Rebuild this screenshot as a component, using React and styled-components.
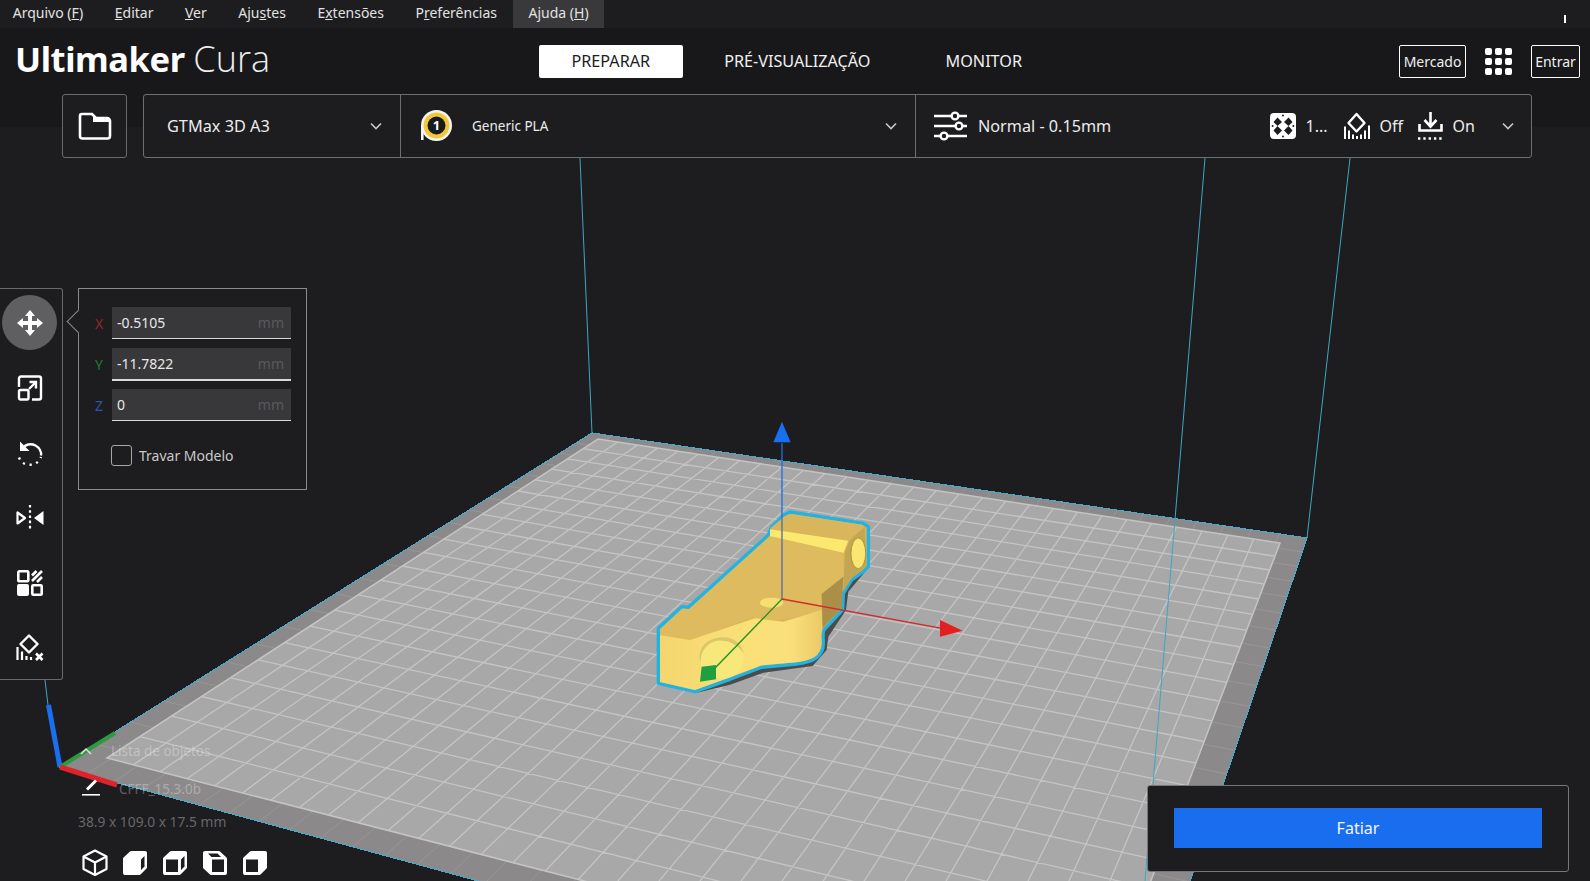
import React, { useMemo } from 'react';
import styled, { createGlobalStyle } from 'styled-components';

const GlobalStyle = createGlobalStyle`
  html, body { margin: 0; padding: 0; background: #1d1d1f; }
  body { font-family: "Noto Sans", "Open Sans", sans-serif; color: #fff; }
`;

const Page = styled.div`
  position: relative;
  width: 1590px;
  height: 881px;
  overflow: hidden;
  display: flex;
  flex-direction: column;
  background: #1d1d1f;
`;

const Scene = styled.svg`
  position: absolute;
  inset: 0;
  width: 1590px;
  height: 881px;
`;

const TopArea = styled.div`
  position: relative;
  flex: none;
  background: linear-gradient(to bottom, #1d1d1f 0 28px, #18181a 28px 127px, transparent 127px);
`;

const MenuBar = styled.div`
  display: flex;
  height: 28px;
  margin-left: -3px;
`;

const MenuItem = styled.div`
  padding: 0 15.75px;
  line-height: 26px;
  font-size: 14px;
  color: #e2e2e2;
  background: ${(props) => (props.$open ? '#39393b' : 'transparent')};
`;

const Mnemonic = styled.span`
  text-decoration: underline;
`;

const Tick = styled.div`
  position: absolute;
  top: 15px;
  left: 1564px;
  width: 2px;
  height: 8px;
  background: #fff;
`;

const HeaderRow = styled.div`
  display: flex;
  align-items: center;
  height: 66px;
  padding: 0 10px 0 15px;
`;

const Logo = styled.div`
  width: 524px;
  margin-top: -4px;
  font-size: 34.5px;
  line-height: 62px;
  font-weight: 700;
  white-space: nowrap;
  letter-spacing: -0.4px;
`;

const LogoLight = styled.span`
  font-family: "Open Sans", sans-serif;
  font-size: 36px;
  font-weight: 300;
  letter-spacing: 0;
  color: #eee;
`;

const Tabs = styled.div`
  display: flex;
  align-items: center;
`;

const Tab = styled.div`
  height: 33px;
  line-height: 32px;
  padding: 0 32.5px;
  margin-right: ${(props) => (props.$active ? '9px' : '10px')};
  border-radius: 2px;
  font-size: 16.2px;
  text-align: center;
  color: ${(props) => (props.$active ? '#1d1d1f' : '#f0f0f0')};
  background: ${(props) => (props.$active ? '#fff' : 'transparent')};
`;

const HeaderRight = styled.div`
  display: flex;
  align-items: center;
  gap: 19px;
  margin-left: auto;
`;

const OutlineButton = styled.div`
  height: 31px;
  line-height: 31px;
  width: ${(props) => props.$width}px;
  border: 1px solid #fff;
  border-radius: 2px;
  font-size: 14px;
  text-align: center;
  color: #f0f0f0;
`;

const ConfigRow = styled.div`
  display: flex;
  height: 64px;
  padding-left: 62px;
  gap: 16px;
`;

const FolderButton = styled.div`
  width: 63px;
  display: flex;
  align-items: center;
  justify-content: center;
  background: #1d1d1f;
  border: 1.5px solid #6a6a6c;
  border-radius: 3px;
`;

const ConfigBar = styled.div`
  display: flex;
  background: #1d1d1f;
  border: 1.5px solid #6e6e70;
  border-radius: 3px;
`;

const ConfigCell = styled.div`
  display: flex;
  align-items: center;
  flex: none;
  width: ${(props) => props.$width}px;
  padding: ${(props) => props.$pad};
  box-sizing: border-box;
  border-left: ${(props) => (props.$first ? 'none' : '1.5px solid #6e6e70')};
`;

const PrinterName = styled.span`
  font-size: 16.3px;
  color: #ececec;
  flex: 1;
`;

const MaterialName = styled.span`
  font-size: 13.5px;
  color: #ececec;
  flex: 1;
  margin-left: 19px;
`;

const ProfileName = styled.span`
  font-size: 16.2px;
  color: #ececec;
  flex: 1;
  margin-left: 11px;
`;

const Setting = styled.span`
  font-size: 16px;
  color: #ececec;
  margin: 0 ${(props) => props.$right || 14}px 0 ${(props) => props.$left || 10}px;
`;

const Workspace = styled.div`
  position: relative;
  flex: 1;
  display: flex;
  justify-content: space-between;
`;

const LeftColumn = styled.div`
  display: flex;
  flex-direction: column;
  padding-top: 130px;
`;

const ToolRow = styled.div`
  display: flex;
  align-items: flex-start;
  gap: 15px;
`;

const ToolBar = styled.div`
  width: 63px;
  height: 392px;
  padding-top: 6px;
  box-sizing: border-box;
  display: flex;
  flex-direction: column;
  background: #1d1d1f;
  border: 1px solid #6a6a6c;
  border-left: none;
  border-radius: 0 3px 3px 0;
`;

const ToolButton = styled.div`
  width: 55px;
  height: 55px;
  margin: 0 0 10px 2px;
  flex: none;
  display: flex;
  align-items: center;
  justify-content: center;
  border-radius: 50%;
  background: ${(props) => (props.$active ? '#5f5f61' : 'transparent')};
`;

const ToolPanel = styled.div`
  position: relative;
  width: 229px;
  height: 202px;
  padding: 18px 15px 0 16px;
  box-sizing: border-box;
  background: #1d1d1f;
  border: 1px solid #8b8b8b;
`;

const Notch = styled.div`
  position: absolute;
  left: -9px;
  top: 24px;
  width: 16px;
  height: 16px;
  background: #1d1d1f;
  border-left: 1px solid #8b8b8b;
  border-bottom: 1px solid #8b8b8b;
  transform: rotate(45deg);
`;

const AxisRow = styled.div`
  display: flex;
  align-items: center;
  height: 32px;
  margin-bottom: 9px;
`;

const AxisLabel = styled.span`
  width: 17px;
  font-size: 14px;
  color: ${(props) => props.$color};
`;

const AxisField = styled.div`
  flex: 1;
  height: 31px;
  padding: 0 7px 0 5px;
  display: flex;
  align-items: center;
  justify-content: space-between;
  background: #38383a;
  border-bottom: ${(props) => (props.$focus ? '2px' : '1px')} solid #d8d8d8;
  font-size: 14px;
  color: #e8e8e8;
`;

const Unit = styled.span`
  font-size: 14px;
  color: #59595b;
`;

const LockRow = styled.div`
  display: flex;
  align-items: center;
  margin: 24px 0 0 16px;
  font-size: 14px;
  color: #c9c9c9;
`;

const CheckBox = styled.div`
  width: 19px;
  height: 19px;
  margin-right: 7px;
  border: 1px solid #a6a6a6;
  border-radius: 3px;
`;

const ObjectInfo = styled.div`
  display: flex;
  flex-direction: column;
  padding: 61px 0 0 78px;
`;

const InfoRow = styled.div`
  display: flex;
  align-items: center;
  height: 20px;
  margin-bottom: ${(props) => props.$gap}px;
  font-size: 13.5px;
  color: rgba(255, 255, 255, 0.3);
`;

const InfoIcon = styled.div`
  width: ${(props) => props.$width}px;
  padding-left: ${(props) => props.$inset}px;
  box-sizing: border-box;
  flex: none;
`;

const Dimensions = styled.div`
  height: 20px;
  font-size: 13.8px;
  color: #676769;
`;

const CubeRow = styled.div`
  display: flex;
  gap: 14px;
  margin: 17px 0 0 4px;
`;

const SlicePanel = styled.div`
  align-self: flex-end;
  margin: 0 21px 9px 0;
  width: 422px;
  height: 87px;
  padding: 22px 26px;
  box-sizing: border-box;
  background: #1d1d1f;
  border: 1px solid #777779;
  border-radius: 3px;
`;

const SliceButton = styled.div`
  height: 40px;
  line-height: 41px;
  background: #196ef0;
  font-size: 16px;
  text-align: center;
  color: #f2f6ff;
`;

// ---- icons ----

const W = '#fff';
const DARK = '#1d1d1f';

const Chevron = () => (
  <svg width="14" height="10" viewBox="0 0 14 10" fill="none">
    <path d="M2 2.500 7 7.500 12 2.500" stroke="#c8c8c8" strokeWidth="1.600" />
  </svg>
);

const FolderIcon = () => (
  <svg width="34" height="28" viewBox="0 0 34 28" fill="none">
    <path
      d="M2 6V4a2 2 0 0 1 2-2h10l4 4h11a3 3 0 0 1 3 3v15a2.500 2.500 0 0 1-2.500 2.500h-25A2.500 2.500 0 0 1 2 24V6z"
      stroke={W}
      strokeWidth="2.600"
    />
    <path d="M15 2.500 18.500 6.500H31V10H15z" fill={W} />
  </svg>
);

const MarketGrid = () => (
  <svg width="27" height="27" viewBox="0 0 27 27" fill={W}>
    {[0, 10, 20].map((y) =>
      [0, 10, 20].map((x) => <rect key={`${x}-${y}`} x={x} y={y} width="7" height="7" rx="2" />)
    )}
  </svg>
);

const MaterialBadge = () => (
  <svg width="33" height="32" viewBox="0 0 33 32">
    <circle cx="16.500" cy="15.500" r="15.500" fill="#f4f4f4" />
    <rect x="1" y="15" width="2.600" height="15" fill="#f4f4f4" />
    <circle cx="16.500" cy="15.500" r="13" fill="#efc93a" />
    <circle cx="16.500" cy="15.500" r="9" fill="#1a1a1c" />
    <text x="16.500" y="20" textAnchor="middle" fontSize="13" fontWeight="700" fill="#fff" fontFamily="Noto Sans">
      1
    </text>
  </svg>
);

const ProfileIcon = () => (
  <svg width="33" height="30" viewBox="0 0 33 30" fill="none" stroke={W} strokeWidth="2.400">
    <path d="M0 5h17M25 5h8M0 15h21M29 15h4M0 25h6M14 25h19" />
    <circle cx="21" cy="5" r="3.400" />
    <circle cx="25" cy="15" r="3.400" />
    <circle cx="10" cy="25" r="3.400" />
  </svg>
);

const InfillIcon = () => (
  <svg width="26" height="26" viewBox="0 0 26 26">
    <rect width="26" height="26" rx="4" fill={W} />
    <g fill={DARK}>
      <path d="M7.500 4.500 12 9 7.500 13 3.500 9zM18.500 4.500 22.500 9 18.500 13 14 9zM7.500 13 12 17.500 7.500 22 3.500 17.500zM18.500 13 22.500 17.500 18.500 22 14 17.500z" />
      <circle cx="13" cy="2.600" r="1" />
      <circle cx="13" cy="23.400" r="1" />
      <circle cx="2.600" cy="13" r="1" />
      <circle cx="23.400" cy="13" r="1" />
    </g>
  </svg>
);

const SupportIcon = () => (
  <svg width="27" height="28" viewBox="0 0 27 28" fill="none" stroke={W}>
    <path d="M13.500 2 21.500 11 13.500 19.500 5.500 11z" strokeWidth="2.400" strokeLinejoin="round" />
    <path d="M2 27V14.500M6 27V18.500M10 27v-4.500M14 27v-3M18 27v-4.500M22 27V18.500M26 27V13.500" strokeWidth="2" />
  </svg>
);

const AdhesionIcon = () => (
  <svg width="25" height="28" viewBox="0 0 25 28" fill="none" stroke={W}>
    <path d="M12.500 0v13" strokeWidth="2.600" />
    <path d="M6.500 8 12.500 14.500 18.500 8" strokeWidth="2.600" />
    <path d="M1.500 12v6.500h22V12" strokeWidth="2.600" />
    <path d="M0 26.500h25" strokeWidth="2.400" strokeDasharray="2.400 2.900" />
  </svg>
);

const MoveIcon = () => (
  <svg width="26" height="26" viewBox="0 0 26 26" fill={W}>
    <path d="M13 0 18 6H15V11H20V8L26 13 20 18V15H15V20H18L13 26 8 20H11V15H6V18L0 13 6 8V11H11V6H8z" />
  </svg>
);

const ScaleIcon = () => (
  <svg width="26" height="26" viewBox="0 0 26 26" fill="none" stroke={W} strokeWidth="2.400">
    <path d="M2 12V3.500A2 2 0 0 1 4 1.500h18a2 2 0 0 1 2 2v19a2 2 0 0 1-2 2h-7" />
    <rect x="2" y="15" width="9.500" height="9.500" rx="1.500" />
    <path d="M12 14 19 7M12.500 7H19V13.500" />
  </svg>
);

const RotateIcon = () => (
  <svg width="26" height="26" viewBox="0 0 26 26" fill="none" stroke={W}>
    <path d="M5.500 9C8 4 14 3.200 18.500 5.500 22.500 7.700 24.500 12 24 15.500" strokeWidth="2.400" />
    <path d="M3 1.500V11h9.500z" fill={W} stroke="none" />
    <path d="M2 17.500c1 2.500 2.500 4.500 5 6 3.500 1.700 8 1.700 11.500 0 2.500-1.500 4.500-3.700 5.500-6.500" strokeWidth="2.400" strokeDasharray="2.200 4.600" />
  </svg>
);

const MirrorIcon = () => (
  <svg width="28" height="26" viewBox="0 0 28 26" fill="none" stroke={W}>
    <path d="M14 0v26" strokeWidth="2.200" strokeDasharray="2.600 2.600" />
    <path d="M1.500 7.500v11L9 13z" strokeWidth="2.200" strokeLinejoin="round" />
    <path d="M27.500 6v14L18 13z" fill={W} stroke="none" />
  </svg>
);

const PerObjectIcon = () => (
  <svg width="26" height="26" viewBox="0 0 26 26" fill="none" stroke={W} strokeWidth="2.600">
    <rect x="1.300" y="1.300" width="10" height="10" rx="1" />
    <path d="M15 11 25 1M15 5.500 19.500 1M20 12l5-5" />
    <rect x="0" y="14" width="12" height="12" rx="2" fill={W} stroke="none" />
    <rect x="15.300" y="15.300" width="9.400" height="9.400" rx="1" />
  </svg>
);

const BlockerIcon = () => (
  <svg width="28" height="27" viewBox="0 0 28 27" fill="none" stroke={W}>
    <path d="M13 1.500 21.500 10 13 18.500 4.500 10z" strokeWidth="2.400" strokeLinejoin="round" />
    <path d="M1.500 26V13M6 26v-8.500M10.500 26v-4M15 26v-3" strokeWidth="2.200" />
    <path d="M20 19.500l6.500 6.500M26.500 19.500 20 26" strokeWidth="2.600" />
  </svg>
);

const TOOLS = [MoveIcon, ScaleIcon, RotateIcon, MirrorIcon, PerObjectIcon, BlockerIcon];

const ChevronUp = () => (
  <svg width="14" height="9" viewBox="0 0 14 9" fill="none" stroke="#e0e0e0" strokeWidth="1.500">
    <path d="M2 7 7 2 12 7" />
  </svg>
);

const PenIcon = () => (
  <svg width="18" height="17" viewBox="0 0 18 17" fill="none" stroke={W}>
    <path d="M5 10.500 14 1.500" strokeWidth="3" />
    <path d="M0 15.800h18" strokeWidth="1.600" />
  </svg>
);

const BOX = 'M1 9 8 2.500A2 2 0 0 1 9.500 2H23A2 2 0 0 1 25 4V18A2 2 0 0 1 24.500 19.500L18.500 25.500A2 2 0 0 1 17 26H3A2 2 0 0 1 1 24z';
const BOX_MIRROR = 'M1 4A2 2 0 0 1 3 2H16.500A2 2 0 0 1 18 2.500L24.500 8.500A2 2 0 0 1 25 10V24A2 2 0 0 1 23 26H9.500A2 2 0 0 1 8 25.500L1.500 19.500A2 2 0 0 1 1 18z';
const SLIT = 'M19 10.500 22.500 7V17.500L19 21z';

// view cube, `face` says which side of the box is shown dark
const CubeIcon = ({ face }) => {
  if (face === 'iso') {
    return (
      <svg width="26" height="27" viewBox="0 0 26 27" fill="none" stroke={W} strokeWidth="2.200" strokeLinejoin="round">
        <path d="M13 1.500 24.500 7.500V20L13 26 1.500 20V7.500z" />
        <path d="M1.500 7.500 13 13.500 24.500 7.500M13 13.500V26" />
      </svg>
    );
  }
  return (
    <svg width="26" height="27" viewBox="0 0 26 27" fill={DARK}>
      <path d={face === 'right' ? BOX_MIRROR : BOX} fill={W} />
      {(face === 'top' || face === 'left') && <path d={SLIT} />}
      {(face === 'left' || face === 'front') && <rect x="4" y="10.500" width="12" height="12.500" />}
      {face === 'right' && (
        <>
          <rect x="10" y="10.500" width="12" height="12.500" />
          <path d="M6 4.500H15.500L19 8H9.500z" />
        </>
      )}
    </svg>
  );
};

// ---- build plate ----

const OUTER = [[59, 767], [592, 433], [1307, 538], [1130, 1058]];
const INNER = [[107, 758], [598, 439], [1280, 543], [1100, 1014]];
const CELLS_U = 22;
const CELLS_V = 30;

const homography = ([p0, p1, p2, p3]) => {
  const dx1 = p1[0] - p2[0];
  const dx2 = p3[0] - p2[0];
  const sx = p0[0] - p1[0] + p2[0] - p3[0];
  const dy1 = p1[1] - p2[1];
  const dy2 = p3[1] - p2[1];
  const sy = p0[1] - p1[1] + p2[1] - p3[1];
  const den = dx1 * dy2 - dx2 * dy1;
  const g = (sx * dy2 - dx2 * sy) / den;
  const h = (dx1 * sy - sx * dy1) / den;
  const a = p1[0] - p0[0] + g * p1[0];
  const b = p3[0] - p0[0] + h * p3[0];
  const d = p1[1] - p0[1] + g * p1[1];
  const e = p3[1] - p0[1] + h * p3[1];
  return (u, v) => {
    const w = g * u + h * v + 1;
    return [(a * u + b * v + p0[0]) / w, (d * u + e * v + p0[1]) / w];
  };
};

const gridPath = (corners) => {
  const map = homography(corners);
  const seg = (p, q) => `M${p[0].toFixed(1)} ${p[1].toFixed(1)}L${q[0].toFixed(1)} ${q[1].toFixed(1)}`;
  let out = '';
  for (let i = 1; i < CELLS_U; i += 1) out += seg(map(i / CELLS_U, 0), map(i / CELLS_U, 1));
  for (let j = 1; j < CELLS_V; j += 1) out += seg(map(0, j / CELLS_V), map(1, j / CELLS_V));
  return out;
};

const toPoints = (corners) => corners.map((p) => p.join(',')).join(' ');

const Model = () => (
  <g transform="translate(630 410) scale(0.3333)">
    <defs>
      <linearGradient id="wall" x1="0" x2="1" y1="0" y2="0">
        <stop offset="0" stopColor="#f4d66f" />
        <stop offset="0.55" stopColor="#fbe078" />
        <stop offset="0.8" stopColor="#f9e07a" />
        <stop offset="1" stopColor="#edc968" />
      </linearGradient>
    </defs>
    {/* cast shadow */}
    <path d="M718 470 655 545 648 600 595 680 590 720 548 768 400 788 300 824 195 850 300 800 395 765 540 740 570 700 580 630 635 595 640 500z" fill="#4c4c4c" />
    {/* outline */}
    <path
      d="M460 316 480 306 700 340 715 350 715 470 700 485 665 510 640 550 638 600 582 660C574 680 586 700 576 722 566 745 548 754 500 762L395 772 300 808 195 845 85 820 85 655 155 590 175 592 415 375 425 350z"
      fill="#d9b55c"
      stroke="#21b4e2"
      strokeWidth="10"
      strokeLinejoin="round"
    />
    {/* top surfaces */}
    <path d="M425 352 462 320 480 311 697 344 662 392 420 360z" fill="#d9b55c" />
    <path d="M420 358 655 392 640 430 420 380z" fill="#fbe96f" />
    <path d="M420 378 640 428 640 500 575 550 575 605 400 640 370 620 185 690 90 678 90 658 160 596 178 598z" fill="#dfbb5f" />
    <path d="M645 425 660 390 704 350 710 468 665 505 640 545z" fill="#c4a552" />
    <ellipse cx="685" cy="430" rx="22" ry="46" fill="#fbe76f" stroke="#8f7f3d" strokeWidth="2" />
    <path d="M640 500 635 595 578 655 575 552z" fill="#ab8f49" />
    {/* front wall */}
    <path d="M90 676 180 690 375 625 460 635 575 600 577 660C570 680 580 700 570 720 560 742 545 750 498 757L395 766 300 802 195 840 90 816z" fill="url(#wall)" />
    <ellipse cx="275" cy="744" rx="66" ry="63" fill="#f8e87c" />
    <path d="M209 744C209 700 245 680 285 682 312 684 332 700 341 730 320 700 290 690 262 692 240 696 222 712 214 735L211 760C209 752 209 748 209 744z" fill="#c4ab5c" opacity="0.55" />
    <ellipse cx="425" cy="578" rx="35" ry="15" fill="#f6de72" />
    {/* move gizmo */}
    <path d="M456 100V318" stroke="#1f6fe0" strokeWidth="4" />
    <path d="M456 318V570" stroke="#4f6f9f" strokeWidth="4" />
    <path d="M456 35 430 97H482z" fill="#1a6ef0" />
    <path d="M456 567 940 656" stroke="#d42a2a" strokeWidth="4" />
    <path d="M930 630 998 662 930 680z" fill="#e3201f" />
    <path d="M456 567 240 790" stroke="#22911f" strokeWidth="4" />
    <path d="M215 770 258 765 258 808 210 815z" fill="#1f9f40" />
  </g>
);

const Stage = () => {
  const outerGrid = useMemo(() => gridPath(OUTER), []);
  const innerGrid = useMemo(() => gridPath(INNER), []);
  return (
    <Scene viewBox="0 0 1590 881">
      <polygon points={toPoints(OUTER)} fill="#8b8989" />
      <path d={outerGrid} stroke="#989696" strokeWidth="1" fill="none" />
      <polygon points={toPoints(INNER)} fill="#a8a8a8" />
      <path d={innerGrid} stroke="#c4c4c4" strokeWidth="1.300" fill="none" />
      <polygon points={toPoints(INNER)} fill="none" stroke="#c4c4c4" strokeWidth="1.500" />
      <polygon points={toPoints(OUTER)} fill="none" stroke="#4fa6c4" strokeWidth="1.200" shapeRendering="crispEdges" />
      <g stroke="#3da6c8" strokeWidth="1" fill="none">
        <path d="M580 158 592 433" />
        <path d="M1205 158 1145 881" />
        <path d="M1350 158 1307 538" />
        <path d="M45 680 48 705" />
      </g>
      <path d="M48.500 705 60 767" stroke="#1a6ef0" strokeWidth="5" />
      <path d="M60 767 115 733" stroke="#2c9a3f" strokeWidth="4" />
      <path d="M60 767 117 785" stroke="#e0232b" strokeWidth="5" />
      <Model />
    </Scene>
  );
};

const AXES = [
  { name: 'X', color: '#8f2a2a', value: '-0.5105' },
  { name: 'Y', color: '#1f7a35', value: '-11.7822', focus: true },
  { name: 'Z', color: '#2a58a8', value: '0' },
];

const App = () => (
  <Page>
    <GlobalStyle />
    <Stage />
    <TopArea>
      <MenuBar>
        <MenuItem>Arquivo (<Mnemonic>F</Mnemonic>)</MenuItem>
        <MenuItem><Mnemonic>E</Mnemonic>ditar</MenuItem>
        <MenuItem><Mnemonic>V</Mnemonic>er</MenuItem>
        <MenuItem>Aju<Mnemonic>s</Mnemonic>tes</MenuItem>
        <MenuItem>E<Mnemonic>x</Mnemonic>tensões</MenuItem>
        <MenuItem>P<Mnemonic>r</Mnemonic>eferências</MenuItem>
        <MenuItem $open>Ajuda (<Mnemonic>H</Mnemonic>)</MenuItem>
      </MenuBar>
      <Tick />
      <HeaderRow>
        <Logo>
          Ultimaker <LogoLight>Cura</LogoLight>
        </Logo>
        <Tabs>
          <Tab $active>PREPARAR</Tab>
          <Tab>PRÉ-VISUALIZAÇÃO</Tab>
          <Tab>MONITOR</Tab>
        </Tabs>
        <HeaderRight>
          <OutlineButton $width={65}>Mercado</OutlineButton>
          <MarketGrid />
          <OutlineButton $width={47}>Entrar</OutlineButton>
        </HeaderRight>
      </HeaderRow>
      <ConfigRow>
        <FolderButton>
          <FolderIcon />
        </FolderButton>
        <ConfigBar>
          <ConfigCell $first $width={256} $pad="0 17px 0 23px">
            <PrinterName>GTMax 3D A3</PrinterName>
            <Chevron />
          </ConfigCell>
          <ConfigCell $width={515} $pad="0 17px 0 19px">
            <MaterialBadge />
            <MaterialName>Generic PLA</MaterialName>
            <Chevron />
          </ConfigCell>
          <ConfigCell $width={616} $pad="0 16px 0 18px">
            <ProfileIcon />
            <ProfileName>Normal - 0.15mm</ProfileName>
            <InfillIcon />
            <Setting $right={15}>1...</Setting>
            <SupportIcon />
            <Setting $right={14.5}>Off</Setting>
            <AdhesionIcon />
            <Setting $right={26}>On</Setting>
            <Chevron />
          </ConfigCell>
        </ConfigBar>
      </ConfigRow>
    </TopArea>
    <Workspace>
      <LeftColumn>
        <ToolRow>
          <ToolBar>
            {TOOLS.map((Icon, index) => (
              <ToolButton key={index} $active={index === 0}>
                <Icon />
              </ToolButton>
            ))}
          </ToolBar>
          <ToolPanel>
            <Notch />
            {AXES.map((axis) => (
              <AxisRow key={axis.name}>
                <AxisLabel $color={axis.color}>{axis.name}</AxisLabel>
                <AxisField $focus={axis.focus}>
                  {axis.value}
                  <Unit>mm</Unit>
                </AxisField>
              </AxisRow>
            ))}
            <LockRow>
              <CheckBox />
              Travar Modelo
            </LockRow>
          </ToolPanel>
        </ToolRow>
        <ObjectInfo>
          <InfoRow $gap={18}>
            <InfoIcon $width={33} $inset={1}>
              <ChevronUp />
            </InfoIcon>
            Lista de objetos
          </InfoRow>
          <InfoRow $gap={13}>
            <InfoIcon $width={41} $inset={4}>
              <PenIcon />
            </InfoIcon>
            CFFF_15.3.0b
          </InfoRow>
          <Dimensions>38.9 x 109.0 x 17.5 mm</Dimensions>
          <CubeRow>
            <CubeIcon face="iso" />
            <CubeIcon face="top" />
            <CubeIcon face="left" />
            <CubeIcon face="right" />
            <CubeIcon face="front" />
          </CubeRow>
        </ObjectInfo>
      </LeftColumn>
      <SlicePanel>
        <SliceButton>Fatiar</SliceButton>
      </SlicePanel>
    </Workspace>
  </Page>
);

export default App;
